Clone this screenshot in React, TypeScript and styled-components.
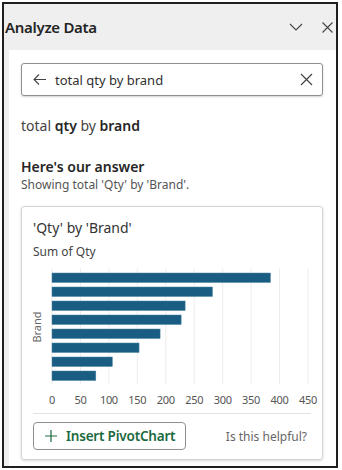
import React from 'react';
import styled, { createGlobalStyle } from 'styled-components';

const GlobalStyle = createGlobalStyle`
    body {
        margin: 0;
        background: #ffffff;
        font-family: 'Noto Sans', 'Open Sans', sans-serif;
    }
`;

const data = [384, 282, 234, 227, 190, 153, 106, 77];
const ticks = [0, 50, 100, 150, 200, 250, 300, 350, 400, 450];

const Frame = styled.div`
    box-sizing: border-box;
    margin: 2px 0 0 2px;
    width: 336px;
    height: 466px;
    border: 2px solid #1f1f1f;
    background: #efefef;
    display: flex;
    flex-direction: column;
`;

const Header = styled.div`
    height: 46px;
    display: flex;
    align-items: center;
    padding: 0 0 0 1px;
`;

const Title = styled.div`
    flex: 1;
    font-size: 15px;
    font-weight: 600;
    color: #242424;
    letter-spacing: -0.3px;
`;

const IconButton = styled.button`
    border: none;
    background: none;
    padding: 0;
    width: 18px;
    height: 24px;
    margin-left: 13px;
    display: flex;
    align-items: center;
    justify-content: center;
    color: #444;
`;

const Body = styled.div`
    flex: 1;
    margin-left: 5px;
    background: #ffffff;
    padding: 13px 13px 0 12px;
    display: flex;
    flex-direction: column;
`;

const Search = styled.div`
    box-sizing: border-box;
    height: 33px;
    border: 1px solid #8f8f8f;
    border-radius: 3px;
    box-shadow: 0 1px 2px rgba(0, 0, 0, 0.18);
    display: flex;
    align-items: center;
    padding: 0 9px 0 11px;
    gap: 9px;
    color: #444;
`;

const SearchText = styled.div`
    flex: 1;
    font-size: 13px;
    color: #303030;
`;

const Query = styled.div`
    margin-top: 20px;
    font-size: 14px;
    line-height: 20px;
    color: #444;

    b {
        font-weight: 600;
        color: #262626;
    }
`;

const AnswerTitle = styled.div`
    margin-top: 21px;
    font-size: 14px;
    line-height: 20px;
    font-weight: 600;
    color: #262626;
`;

const AnswerSub = styled.div`
    font-size: 12px;
    line-height: 16px;
    color: #555;
`;

const Card = styled.div`
    box-sizing: border-box;
    margin-top: 13px;
    height: 254px;
    border: 1px solid #d4d4d4;
    border-radius: 3px;
    box-shadow: 0 1px 3px rgba(0, 0, 0, 0.15);
    display: flex;
    flex-direction: column;
    padding: 11px 11px 0 0;
`;

const CardTitle = styled.div`
    padding-left: 11px;
    font-size: 14px;
    line-height: 20px;
    color: #333;
`;

const CardSub = styled.div`
    padding-left: 11px;
    margin-top: 6px;
    font-size: 12px;
    line-height: 16px;
    color: #444;
`;

const Chart = styled.svg`
    display: block;
    margin-top: 2px;
    font-family: 'Noto Sans', 'Open Sans', sans-serif;
`;

const Divider = styled.div`
    margin: 5px 0 0 11px;
    height: 1px;
    background: #e3e3e3;
`;

const Footer = styled.div`
    display: flex;
    align-items: center;
    justify-content: space-between;
    margin-top: 8px;
    padding-left: 11px;
`;

const InsertButton = styled.button`
    box-sizing: border-box;
    width: 153px;
    height: 28px;
    border: 1px solid #8f8f8f;
    border-radius: 4px;
    background: #fff;
    display: flex;
    align-items: center;
    gap: 9px;
    padding: 0 0 0 11px;
    font-family: inherit;
    font-size: 13.5px;
    letter-spacing: -0.2px;
    font-weight: 600;
    color: #1a6a40;
`;

const Helpful = styled.div`
    font-size: 12px;
    color: #666;
    margin-right: 4px;
`;

const x0 = 30;
const scale = 256 / 450;

const BarChart: React.FC = () => (
    <Chart width={300} height={146}>
        {ticks.map(t => (
            <line
                key={t}
                x1={x0 + t * scale}
                x2={x0 + t * scale}
                y1={6}
                y2={122}
                stroke="#ececec"
                strokeWidth={1}
            />
        ))}
        {data.map((v, i) => (
            <rect
                key={i}
                x={x0}
                y={11 + i * 14}
                width={v * scale}
                height={9.5}
                fill="#1a5d82"
                stroke="#4b84a3"
                strokeWidth={0.5}
            />
        ))}
        {ticks.map(t => (
            <text
                key={t}
                x={x0 + t * scale}
                y={142}
                fontSize={11}
                fill="#555"
                textAnchor="middle"
                letterSpacing={-0.3}
            >
                {t}
            </text>
        ))}
        <text
            x={19}
            y={65}
            fontSize={11}
            fill="#666"
            textAnchor="middle"
            transform="rotate(-90 19 65)"
        >
            Brand
        </text>
    </Chart>
);

const App: React.FC = () => (
    <>
        <GlobalStyle />
        <Frame>
            <Header>
                <Title>Analyze Data</Title>
                <IconButton>
                    <svg width="14" height="8" viewBox="0 0 14 8">
                        <path d="M1 1l6 6 6-6" fill="none" stroke="#444" strokeWidth="1.1" />
                    </svg>
                </IconButton>
                <IconButton>
                    <svg width="11" height="11" viewBox="0 0 11 11">
                        <path d="M0.5 0.5l10 10M10.5 0.5l-10 10" fill="none" stroke="#444" strokeWidth="1.1" />
                    </svg>
                </IconButton>
            </Header>
            <Body>
                <Search>
                    <svg width="13" height="11" viewBox="0 0 13 11">
                        <path d="M6 0.5L1 5.5l5 5M1 5.5h12" fill="none" stroke="#444" strokeWidth="1.1" />
                    </svg>
                    <SearchText>total qty by brand</SearchText>
                    <svg width="13" height="13" viewBox="0 0 13 13">
                        <path d="M1 1l11 11M12 1L1 12" fill="none" stroke="#444" strokeWidth="1.2" />
                    </svg>
                </Search>
                <Query>
                    total <b>qty</b> by <b>brand</b>
                </Query>
                <AnswerTitle>Here's our answer</AnswerTitle>
                <AnswerSub>Showing total 'Qty' by 'Brand'.</AnswerSub>
                <Card>
                    <CardTitle>'Qty' by 'Brand'</CardTitle>
                    <CardSub>Sum of Qty</CardSub>
                    <BarChart />
                    <Divider />
                    <Footer>
                        <InsertButton>
                            <svg width="12" height="12" viewBox="0 0 12 12">
                                <path d="M6 0v12M0 6h12" fill="none" stroke="#1a6a40" strokeWidth="1.2" />
                            </svg>
                            Insert PivotChart
                        </InsertButton>
                        <Helpful>Is this helpful?</Helpful>
                    </Footer>
                </Card>
            </Body>
        </Frame>
    </>
);

export default App;
